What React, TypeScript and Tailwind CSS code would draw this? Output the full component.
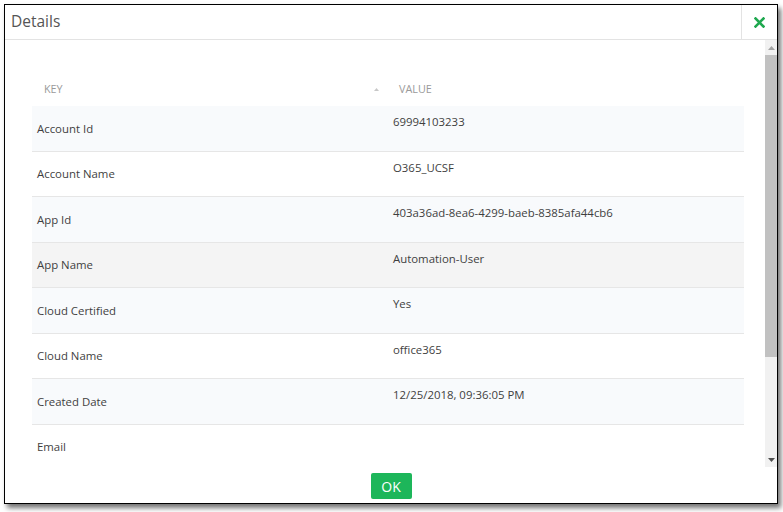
import React from "react";

const rows: { key: string; value: string; tone: string }[] = [
  { key: "Account Id", value: "69994103233", tone: "bg-[#f8fafc]" },
  { key: "Account Name", value: "O365_UCSF", tone: "bg-white" },
  { key: "App Id", value: "403a36ad-8ea6-4299-baeb-8385afa44cb6", tone: "bg-[#f8fafc]" },
  { key: "App Name", value: "Automation-User", tone: "bg-[#f4f4f4]" },
  { key: "Cloud Certified", value: "Yes", tone: "bg-[#f8fafc]" },
  { key: "Cloud Name", value: "office365", tone: "bg-white" },
  { key: "Created Date", value: "12/25/2018, 09:36:05 PM", tone: "bg-[#f8fafc]" },
  { key: "Email", value: "", tone: "bg-white" },
];

export default function App() {
  return (
    <div className="w-[783px] h-[512px] bg-white pt-[4px] pl-[4px] font-['Open_Sans',_'Liberation_Sans',_sans-serif]">
      <div className="w-[774px] h-[500px] border border-black bg-white flex flex-col shadow-[3px_4px_5px_rgba(0,0,0,0.55)]">
        {/* header */}
        <div className="h-[35px] flex items-stretch border-b border-[#e3e3e3] shrink-0">
          <div className="flex-1 flex items-center pl-[6px] text-[15.5px] text-[#555]">Details</div>
          <button className="w-[36px] border-l border-[#e3e3e3] flex items-center justify-center">
            <svg width="11" height="11" viewBox="0 0 11 11">
              <path d="M1.5 1.5 L9.5 9.5 M9.5 1.5 L1.5 9.5" stroke="#1fa84f" strokeWidth="2.6" strokeLinecap="square" />
            </svg>
          </button>
        </div>

        {/* body */}
        <div className="h-[427px] flex shrink-0">
          <div className="flex-1 overflow-hidden pt-[32px] pl-[27px] pr-[20px]">
            <div className="w-[712px] text-[11.4px] text-[#3f3f3f]">
              <div className="h-[34px] flex items-center text-[10.8px] text-[#9a9a9a] uppercase">
                <div className="w-1/2 flex items-center justify-between pl-[12px] pr-[8px]">
                  <span>Key</span>
                  <svg width="7" height="5" viewBox="0 0 7 5">
                    <path d="M3.5 1 L6 4 L1 4 Z" fill="#c8c8c8" />
                  </svg>
                </div>
                <div className="w-1/2 pl-[11px]">Value</div>
              </div>
              {rows.map((r) => (
                <div key={r.key} className={`h-[45.5px] flex border-b border-[#e6e6e6] ${r.tone}`}>
                  <div className="w-1/2 flex items-center pl-[5px]">{r.key}</div>
                  <div className="w-1/2 pl-[5px] pt-[7px]">{r.value}</div>
                </div>
              ))}
            </div>
          </div>
          {/* scrollbar */}
          <div className="w-[12px] bg-[#f1f1f1] flex flex-col items-center">
            <div className="h-[15px] flex items-center justify-center">
              <svg width="7" height="4" viewBox="0 0 7 4">
                <path d="M3.5 0 L7 4 L0 4 Z" fill="#a3a3a3" />
              </svg>
            </div>
            <div className="w-full h-[302px] bg-[#c1c1c1]" />
            <div className="flex-1" />
            <div className="h-[15px] flex items-center justify-center">
              <svg width="7" height="4" viewBox="0 0 7 4">
                <path d="M0 0 L7 0 L3.5 4 Z" fill="#505050" />
              </svg>
            </div>
          </div>
        </div>

        {/* footer */}
        <div className="flex-1 flex justify-center pt-[6px]">
          <button className="w-[41px] h-[26px] bg-[#1db65a] rounded-[2px] text-white text-[14px] flex items-center justify-center">
            OK
          </button>
        </div>
      </div>
    </div>
  );
}
